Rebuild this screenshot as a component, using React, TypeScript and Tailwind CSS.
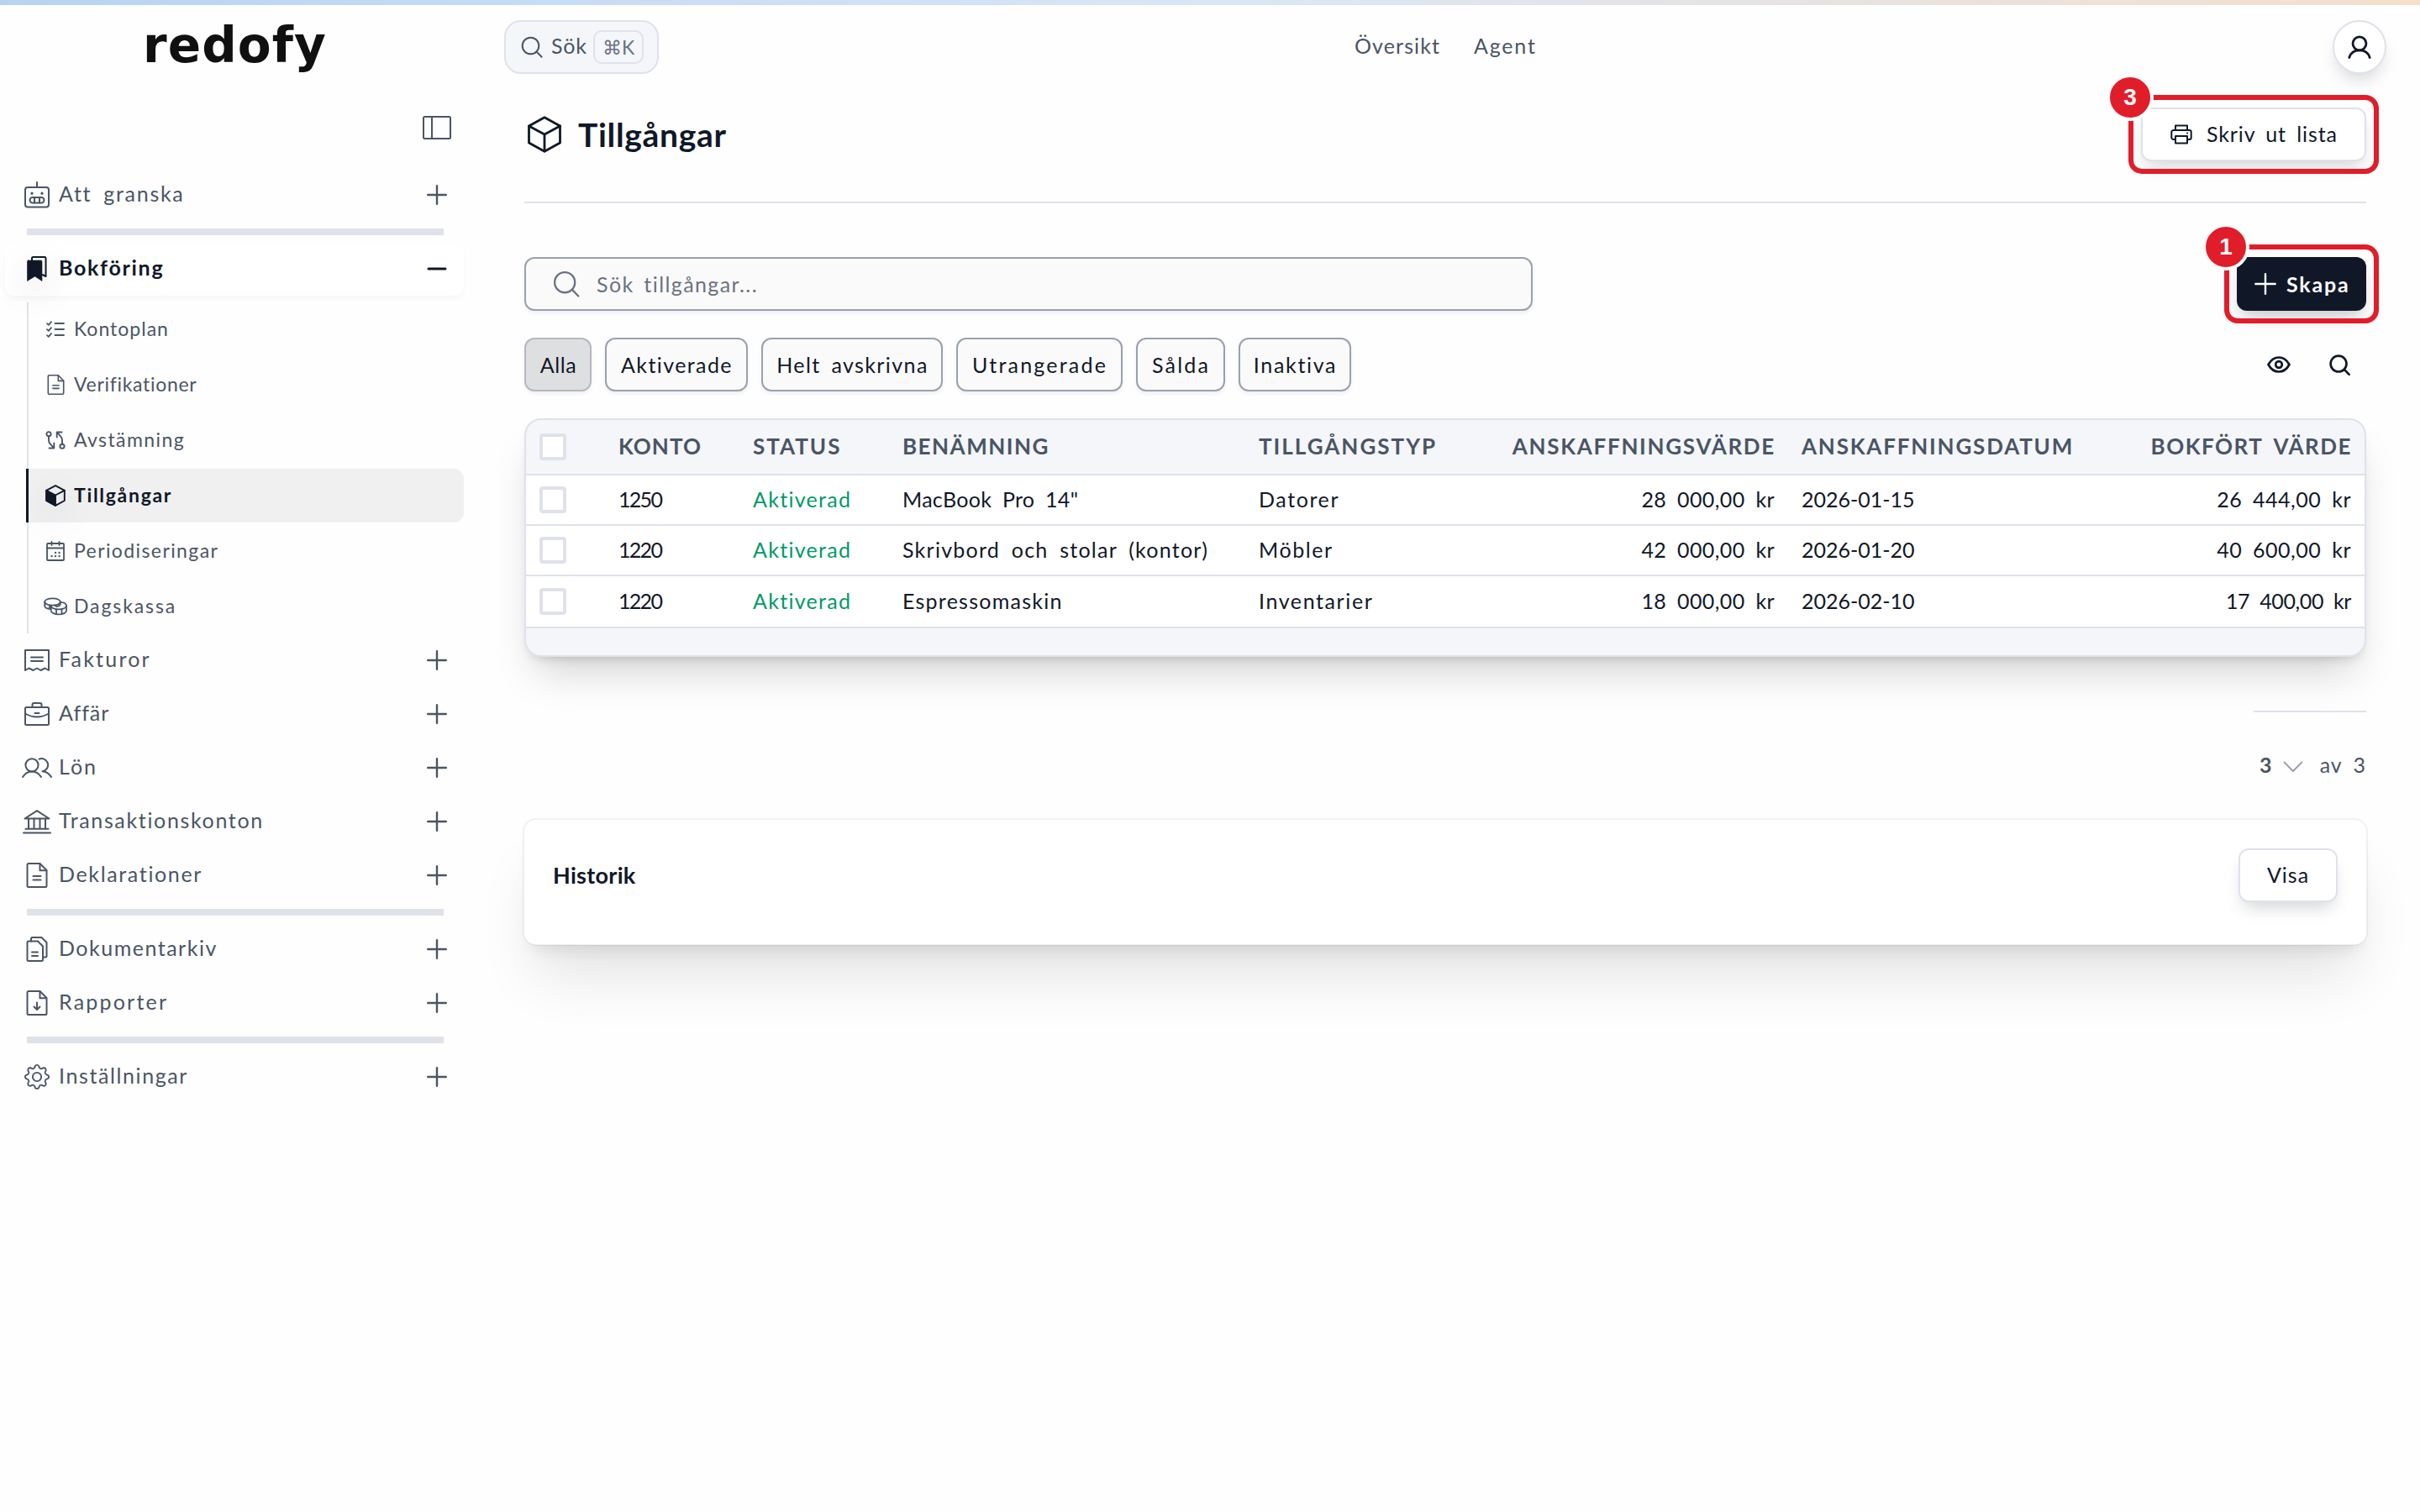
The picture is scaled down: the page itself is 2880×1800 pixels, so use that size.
import { BsGear } from 'react-icons/bs';

const stroke = {
    fill: 'none',
    stroke: 'currentColor',
    strokeWidth: 2,
    strokeLinecap: 'round' as const,
    strokeLinejoin: 'round' as const,
};

const SearchIcon = ({ className, width = 2 }: any) => (
    <svg viewBox="0 0 26 26" className={className} {...stroke} strokeWidth={width}>
        <circle cx="11.5" cy="11.5" r="9.8" />
        <path d="M18.6 18.6 24.6 24.8" />
    </svg>
);

const PlusIcon = ({ className, width = 2.4 }: any) => (
    <svg viewBox="0 0 24 24" className={className} {...stroke} strokeWidth={width}>
        <path d="M12 1.2V22.8M1.2 12H22.8" />
    </svg>
);

const MinusIcon = () => (
    <svg viewBox="0 0 24 24" className="h-6 w-6" {...stroke} strokeWidth={3}>
        <path d="M2 12H22" />
    </svg>
);

const SidebarIcon = () => (
    <svg viewBox="0 0 34 28" className="h-7 w-[34px]" {...stroke}>
        <rect x="1" y="1" width="32" height="26" rx="1.5" />
        <path d="M11 1V27" />
    </svg>
);

const RobotIcon = () => (
    <svg viewBox="0 0 30 32" className="h-8 w-[30px]" {...stroke}>
        <rect x="1" y="7" width="28" height="23.5" rx="3" />
        <path d="M15 1V7" />
        <circle cx="9" cy="14.2" r="1.6" fill="currentColor" stroke="none" />
        <circle cx="21" cy="14.2" r="1.6" fill="currentColor" stroke="none" />
        <rect x="6.5" y="19" width="17" height="6.4" rx="3.2" />
        <path d="M12 19v6.4M18 19v6.4" />
    </svg>
);

const BookmarksIcon = () => (
    <svg viewBox="0 0 24 30" className="h-[30px] w-6 drop-shadow-[0_12px_18px_rgba(17,24,39,0.15)]" {...stroke}>
        <path d="M1.5 5h15a1.5 1.5 0 0 1 1.5 1.5V29.5L9.5 24 .5 29.5V6.5A1.5 1.5 0 0 1 1.5 5Z" fill="currentColor" strokeWidth="0.6" />
        <path d="M6 5V2.5A1.5 1.5 0 0 1 7.5 1H21a1.5 1.5 0 0 1 1.5 1.5V24L18.5 22" />
    </svg>
);

const FileIcon = ({ className }: any) => (
    <svg viewBox="0 0 26 30" className={className} {...stroke}>
        <path d="M3 1H16.5L24.5 9V27.5A1.5 1.5 0 0 1 23 29H3A1.5 1.5 0 0 1 1.5 27.5V2.5A1.5 1.5 0 0 1 3 1Z" />
        <path d="M16.5 1.5V9.2H24" />
        <path d="M8.5 16H17.5M8.5 20.5H17.5" />
    </svg>
);

const ReportIcon = () => (
    <svg viewBox="0 0 26 30" className="h-[30px] w-[26px]" {...stroke}>
        <path d="M3 1H16.5L24.5 9V27.5A1.5 1.5 0 0 1 23 29H3A1.5 1.5 0 0 1 1.5 27.5V2.5A1.5 1.5 0 0 1 3 1Z" />
        <path d="M16.5 1.5V9.2H24" />
        <path d="M13 14.5V22.5M9.5 19.5 13 23 16.5 19.5" />
    </svg>
);

const DocumentsIcon = () => (
    <svg viewBox="0 0 26 30" className="h-[30px] w-[26px]" {...stroke}>
        <path d="M3 5.5H14L20 11.5V27.5A1.5 1.5 0 0 1 18.5 29H3A1.5 1.5 0 0 1 1.5 27.5V7A1.5 1.5 0 0 1 3 5.5Z" />
        <path d="M6 5.5V2.5A1.5 1.5 0 0 1 7.5 1H18.5L24.5 7V23A1.5 1.5 0 0 1 23 24.5H20.5" />
        <path d="M7 18.5H14M7 23H14" />
    </svg>
);

const ChecklistIcon = () => (
    <svg viewBox="0 0 22 20" className="h-5 w-[22px]" {...stroke} strokeWidth={1.8}>
        <path d="M1 3.2 2.8 4.8 6 1.2M1 10.2 2.8 11.8 6 8.2M1 17.2 2.8 18.8 6 15.2" />
        <path d="M10.5 3H21M10.5 10H21M10.5 17H21" />
    </svg>
);

const ReconcileIcon = () => (
    <svg viewBox="0 0 24 22" className="h-[22px] w-6" {...stroke} strokeWidth={1.9}>
        <circle cx="4" cy="3.7" r="2.6" />
        <path d="M4 6.3V11Q4 13.5 5.5 15L10 20.3M10.3 14.5V20.5H4.5" />
        <circle cx="20" cy="18.3" r="2.6" />
        <path d="M20 15.7V11Q20 8.5 18.5 7L14 1.7M13.7 7.5V1.5H19.5" />
    </svg>
);

const CubeFilledIcon = () => (
    <svg viewBox="0 0 24 26" className="h-[26px] w-6 drop-shadow-[0_12px_18px_rgba(17,24,39,0.15)]" {...stroke} strokeWidth={1.9}>
        <path d="M12 1.2 22.8 6.8V19L12 24.8 1.2 19V6.8Z" />
        <path d="M22.8 6.8 12 12.5" />
        <path d="M1.2 6.8 12 12.5V24.8L1.2 19Z" fill="currentColor" />
    </svg>
);

const CubeIcon = () => (
    <svg viewBox="0 0 42 44" className="h-11 w-[42px]" {...stroke} strokeWidth={2.8}>
        <path d="M21 1.8 39.5 12V32L21 42.2 2.5 32V12Z" />
        <path d="M2.5 12 21 22 39.5 12M21 22V42" />
    </svg>
);

const CalendarIcon = () => (
    <svg viewBox="0 0 22 24" className="h-6 w-[22px]" {...stroke} strokeWidth={1.8}>
        <rect x="1" y="3" width="20" height="20" rx="1" />
        <path d="M1 8.5H21M6.5 1V5M15.5 1V5" />
        <path d="M11 14h.1M15.5 14h.1M6.5 18.2h.1M11 18.2h.1M15.5 18.2h.1" strokeWidth={2.3} />
    </svg>
);

const CoinsIcon = () => (
    <svg viewBox="0 0 28 22" className="h-[22px] w-7" {...stroke} strokeWidth={1.8}>
        <ellipse cx="10.5" cy="5.5" rx="9.3" ry="4.2" />
        <path d="M1.2 5.5V10C1.2 12 4 13.8 8.5 14M7 9.5V13.8M13.5 9.5V10" />
        <path d="M19.8 5.8C24 6 27 7.6 27 10.2 27 12.6 23 14.4 18 14.4S8.7 12.6 8.7 10.2" />
        <path d="M8.7 10.2V16C8.7 18.4 13 20.4 18 20.4S27 18.4 27 16V10.2M15 14.3V20M21.5 14.3V20M19.8 5.5V8.5Q19 10.8 15 11" />
    </svg>
);

const ReceiptIcon = () => (
    <svg viewBox="0 0 30 26" className="h-[26px] w-[30px]" {...stroke}>
        <path d="M1 1H29V25L24.5 22.5 19.5 25 15 22.5 10.5 25 5.5 22.5 1 25Z" />
        <path d="M8 9.5H22M8 14H22" />
    </svg>
);

const BriefcaseIcon = () => (
    <svg viewBox="0 0 30 28" className="h-7 w-[30px]" {...stroke}>
        <rect x="1" y="6" width="28" height="21" rx="1.5" />
        <path d="M9.5 6V3A2 2 0 0 1 11.5 1H18.5A2 2 0 0 1 20.5 3V6M1 13.5Q15 21.5 29 13.5M12.5 13H17.5" />
    </svg>
);

const PeopleIcon = () => (
    <svg viewBox="0 0 36 24" className="h-6 w-9" {...stroke}>
        <circle cx="12" cy="8.8" r="7.6" />
        <path d="M1 23Q5 16.4 12 16.4T23 23" />
        <path d="M20.5 1.7A7.6 7.6 0 1 1 24.5 16.2Q31 16.6 35 23" />
    </svg>
);

const BankIcon = () => (
    <svg viewBox="0 0 34 29" className="h-[29px] w-[34px]" {...stroke}>
        <path d="M17 1.2 31.5 10.5H2.5Z" />
        <path d="M7 10.5V22.5M13.5 10.5V22.5M20.5 10.5V22.5M27 10.5V22.5M3.5 22.8H30.5M1 27.5H33" />
    </svg>
);

const UserIcon = () => (
    <svg viewBox="0 0 28 28" className="h-7 w-7" {...stroke} strokeWidth={2.8}>
        <circle cx="14" cy="9.8" r="8" />
        <path d="M1.8 26.5C3.5 20.5 8 17.8 14 17.8S24.5 20.5 26.2 26.5" />
    </svg>
);

const PrinterIcon = () => (
    <svg viewBox="0 0 26 24" className="h-6 w-[26px]" {...stroke}>
        <path d="M6 7V1.5H20V7M6 18H3.5A2.2 2.2 0 0 1 1.3 15.8V9.2A2.2 2.2 0 0 1 3.5 7H22.5A2.2 2.2 0 0 1 24.7 9.2V15.8A2.2 2.2 0 0 1 22.5 18H20" />
        <path d="M6 14H20V22.5H6ZM20 10.6h.1" />
    </svg>
);

const EyeIcon = () => (
    <svg viewBox="0 0 28 20" className="h-5 w-7" {...stroke} strokeWidth={2.7}>
        <path d="M1.5 10C4.5 4.5 9 1.5 14 1.5S23.5 4.5 26.5 10C23.5 15.5 19 18.5 14 18.5S4.5 15.5 1.5 10Z" />
        <circle cx="14" cy="10" r="3.8" />
    </svg>
);

const ChevronIcon = () => (
    <svg viewBox="0 0 24 14" className="mt-1 h-3.5 w-6 text-gray-400" {...stroke}>
        <path d="M1.5 1.5 12 12 22.5 1.5" />
    </svg>
);

const NavItem = ({ icon, label, open, text = 'tracking-[1.5px]' }: any) => (
    <div
        className={
            open
                ? 'mr-2 ml-1.5 flex h-16 items-center rounded-xl bg-white pr-5 pl-3 font-bold text-gray-900 shadow-[0_4px_6px_rgba(0,0,0,0.03)]'
                : 'mr-2 ml-1.5 flex h-16 items-center pr-5 pl-3 text-gray-600'
        }
    >
        <span className="flex w-[52px] justify-center">{icon}</span>
        <span className={`flex-1 pb-0.5 text-[25px] [word-spacing:6px] ${text}`}>{label}</span>
        {open ? <MinusIcon /> : <PlusIcon className="h-6 w-6" />}
    </div>
);

const subItems = [
    { icon: <ChecklistIcon />, label: 'Kontoplan', text: 'tracking-[1px]' },
    { icon: <FileIcon className="h-6 w-[21px]" />, label: 'Verifikationer', text: 'tracking-[0.7px]' },
    { icon: <ReconcileIcon />, label: 'Avstämning', text: 'tracking-[1.4px]' },
    { icon: <CubeFilledIcon />, label: 'Tillgångar', text: 'tracking-[1.7px]', active: true },
    { icon: <CalendarIcon />, label: 'Periodiseringar', text: 'tracking-[1.4px]' },
    { icon: <CoinsIcon />, label: 'Dagskassa', text: 'tracking-[1.9px]' },
];

const Divider = () => <div className="my-2 ml-8 h-2 w-[496px] bg-[#dfe2ea]" />;

const Sidebar = () => (
    <aside className="w-[560px] shrink-0">
        <div className="flex h-[104px] items-center justify-end pt-2 pr-[23px]">
            <span className="text-gray-600">
                <SidebarIcon />
            </span>
        </div>
        <NavItem icon={<RobotIcon />} label="Att granska" text="tracking-[1.7px]" />
        <Divider />
        <NavItem icon={<BookmarksIcon />} label="Bokföring" text="tracking-[1.7px]" open />
        <div className="mt-2 ml-8 flex flex-col gap-0.5 border-l-2 border-[#dfe2ea]">
            {subItems.map((s) => (
                <div
                    key={s.label}
                    className={
                        s.active
                            ? 'mr-2 -ml-[3px] flex h-16 items-center rounded-r-xl border-l-[3px] border-gray-900 bg-[#f0f0f1] font-bold text-gray-900'
                            : 'flex h-16 items-center text-gray-600'
                    }
                >
                    <span className="ml-4 flex w-8 justify-center">{s.icon}</span>
                    <span className={`ml-1.5 pb-0.5 text-[23px] ${s.text}`}>{s.label}</span>
                </div>
            ))}
        </div>
        <NavItem icon={<ReceiptIcon />} label="Fakturor" text="tracking-[2.2px]" />
        <NavItem icon={<BriefcaseIcon />} label="Affär" text="tracking-[1px]" />
        <NavItem icon={<PeopleIcon />} label="Lön" text="tracking-[2px]" />
        <NavItem icon={<BankIcon />} label="Transaktionskonton" text="tracking-[1.65px]" />
        <NavItem icon={<FileIcon className="h-[30px] w-[26px]" />} label="Deklarationer" text="tracking-[1.65px]" />
        <Divider />
        <NavItem icon={<DocumentsIcon />} label="Dokumentarkiv" />
        <NavItem icon={<ReportIcon />} label="Rapporter" text="tracking-[2.2px]" />
        <Divider />
        <NavItem icon={<BsGear className="h-[30px] w-[30px]" />} label="Inställningar" text="tracking-[1.6px]" />
    </aside>
);

const Header = () => (
    <header className="flex h-[90px] items-center pt-2.5 text-gray-600">
        <div className="w-[600px] pb-1 pl-[170px] font-['DejaVu_Sans'] text-[58px] leading-none font-bold tracking-[1.1px] text-[#101010]">
            redofy
        </div>
        <div className="flex h-16 w-[184px] items-center rounded-[20px] border-2 border-[#dfe2ea] bg-[#f4f6fa] pl-[18px]">
            <SearchIcon className="h-[26px] w-[26px]" />
            <span className="ml-2.5 w-[50px] pb-0.5 text-[25px] tracking-[0.8px]">Sök</span>
            <span className="flex h-10 w-[60px] items-center justify-center rounded-[10px] border-2 border-[#dfe2ea] text-[23px] text-gray-500">
                ⌘K
            </span>
        </div>
        <nav className="ml-[828px] flex flex-1 pb-0.5 text-[25px] tracking-[1.1px]">
            <a className="w-[142px]">Översikt</a>
            <a className="tracking-[1.8px]">Agent</a>
        </nav>
        <div className="mr-10 flex h-16 w-16 items-center justify-center rounded-full border-2 border-[#dfe2ea] bg-white text-gray-900 shadow-[0_12px_20px_-6px_rgba(17,24,39,0.18)]">
            <UserIcon />
        </div>
    </header>
);

// Red frame with a numbered badge, laid over the control it points at
const Callout = ({ n, children }: any) => (
    <div className="relative">
        {children}
        <div className="pointer-events-none absolute -inset-[15px] rounded-2xl border-[6px] border-[#e11d2a]">
            <div className="absolute -top-[31px] -left-[32px] flex h-14 w-14 items-center justify-center rounded-full border-4 border-white bg-[#e11d2a] font-['Liberation_Sans'] text-[28px] leading-none font-bold text-white">
                {n}
            </div>
        </div>
    </div>
);

const filters = [
    { label: 'Alla', box: 'w-20 border-[#b5b9c1] bg-[#dedfe1] tracking-[0.6px]' },
    { label: 'Aktiverade', box: 'w-[170px] border-gray-400 bg-[#fafafa] tracking-[1.4px]' },
    { label: 'Helt avskrivna', box: 'w-[216px] border-gray-400 bg-[#fafafa] tracking-[1.4px]' },
    { label: 'Utrangerade', box: 'w-[198px] border-gray-400 bg-[#fafafa] tracking-[2.2px]' },
    { label: 'Sålda', box: 'w-[106px] border-gray-400 bg-[#fafafa] tracking-[2.2px]' },
    { label: 'Inaktiva', box: 'w-[134px] border-gray-400 bg-[#fafafa] tracking-[1.7px]' },
];

const assets = [
    { account: '1250', name: 'MacBook Pro 14"', type: 'Datorer', cost: '28 000,00 kr', date: '2026-01-15', value: '26 444,00 kr' },
    { account: '1220', name: 'Skrivbord och stolar (kontor)', type: 'Möbler', cost: '42 000,00 kr', date: '2026-01-20', value: '40 600,00 kr' },
    { account: '1220', name: 'Espressomaskin', type: 'Inventarier', cost: '18 000,00 kr', date: '2026-02-10', value: '17 400,00 kr' },
];

const cols = 'grid grid-cols-[94px_160px_178px_424px_300px_346px_400px_286px] items-center';

const Checkbox = () => <span className="ml-4 block h-8 w-8 rounded-sm border-4 border-[#dfe2ea] bg-white" />;

const AssetTable = () => (
    <div className="mt-8 overflow-hidden rounded-[20px] border-2 border-[#dfe2ea] bg-[#f4f6fa] shadow-[0_30px_50px_-14px_rgba(0,0,0,0.18),0_8px_14px_-8px_rgba(0,0,0,0.2)]">
        <div className={`${cols} h-[66px] border-b-2 border-[#dfe2ea] text-[26px] font-bold tracking-[1.7px] text-gray-600`}>
            <Checkbox />
            <span className="px-4 pb-0.5 tracking-[1px]">KONTO</span>
            <span className="px-4 pb-0.5 tracking-[2px]">STATUS</span>
            <span className="px-4 pb-0.5 tracking-[1.5px]">BENÄMNING</span>
            <span className="px-4 pb-0.5 tracking-[2px]">TILLGÅNGSTYP</span>
            <span className="pr-[15px] pb-0.5 text-right whitespace-nowrap">ANSKAFFNINGSVÄRDE</span>
            <span className="px-4 pb-0.5 tracking-[1.8px]">ANSKAFFNINGSDATUM</span>
            <span className="pr-[15px] pb-0.5 text-right tracking-[1.5px] [word-spacing:6px]">BOKFÖRT VÄRDE</span>
        </div>
        {assets.map((a, i) => (
            <div
                key={a.name}
                className={`${cols} ${i === assets.length - 1 ? 'h-[62px]' : 'h-[60px]'} border-b-2 border-[#dfe2ea] bg-white text-[25px] text-gray-900 [&>span]:whitespace-nowrap`}
            >
                <Checkbox />
                <span className="px-4 tracking-[-1.7px]">{a.account}</span>
                <span className="px-4 tracking-[1.3px] text-emerald-600">Aktiverad</span>
                <span className={`px-4 [word-spacing:6px] ${i === 0 ? 'tracking-[0.3px]' : 'tracking-[1.25px]'}`}>{a.name}</span>
                <span className="px-4 tracking-[1.6px]">{a.type}</span>
                <span className="pr-4 text-right tracking-[0.4px] [word-spacing:6px]">{a.cost}</span>
                <span className="px-4">{a.date}</span>
                <span className={`pr-4 text-right [word-spacing:6px] ${i === 2 ? 'tracking-[-0.4px]' : 'tracking-[0.5px]'}`}>{a.value}</span>
            </div>
        ))}
        <div className="h-8" />
    </div>
);

export default function App() {
    return (
        <div className="min-h-[1800px] w-[2880px] bg-[#fefefe] font-['Lato',sans-serif]">
            <div className="h-1.5 bg-linear-to-r from-[#b7d3f2] via-[#d9e6f7] via-50% to-[#f5dfcb]" />
            <div className="flex flex-col">
                <Header />
                <div className="flex">
                    <Sidebar />
                    <main className="ml-16 w-[2192px]">
                        <div className="flex h-[146px] items-center justify-between border-b-2 border-[#dfe2ea] pb-4">
                            <h1 className="flex items-center text-[39px] font-bold tracking-[0.7px] text-gray-900">
                                <span className="mr-[19px] ml-[3px]">
                                    <CubeIcon />
                                </span>
                                Tillgångar
                            </h1>
                            <Callout n={3}>
                                <button className="flex h-16 w-[268px] items-center rounded-xl border-2 border-[#dfe2ea] bg-white pl-[33px] text-[25px] tracking-[0.9px] text-gray-900 [word-spacing:5px] shadow-[0_12px_20px_-6px_rgba(17,24,39,0.18)]">
                                    <PrinterIcon />
                                    <span className="ml-[17px]">Skriv ut lista</span>
                                </button>
                            </Callout>
                        </div>

                        <div className="mt-16 flex items-center justify-between">
                            <div className="flex h-16 w-[1200px] items-center rounded-xl border-2 border-gray-400 bg-[#fafafa] pl-8 text-gray-500 shadow-[0_3px_5px_rgba(0,0,0,0.06)]">
                                <SearchIcon className="h-8 w-8" width={1.9} />
                                <span className="ml-5 pt-0.5 text-[25px] tracking-[1.4px] [word-spacing:4px]">Sök tillgångar...</span>
                            </div>
                            <Callout n={1}>
                                <button className="flex h-16 w-[154px] items-center rounded-xl bg-gray-900 pl-[21px] text-[25px] font-bold tracking-[1.8px] text-white shadow-[0_12px_20px_-6px_rgba(17,24,39,0.25)]">
                                    <PlusIcon className="h-[26px] w-[26px]" width={2.2} />
                                    <span className="ml-3 pt-0.5">Skapa</span>
                                </button>
                            </Callout>
                        </div>

                        <div className="mt-8 flex items-center gap-4">
                            {filters.map((f) => (
                                <button
                                    key={f.label}
                                    className={`flex h-16 items-center justify-center rounded-xl border-2 pt-0.5 pl-px text-[25px] whitespace-nowrap text-gray-900 [word-spacing:5px] shadow-[0_3px_5px_rgba(0,0,0,0.06)] ${f.box}`}
                                >
                                    {f.label}
                                </button>
                            ))}
                            <div className="mr-[19px] ml-auto flex items-center gap-[46px] text-gray-900">
                                <EyeIcon />
                                <SearchIcon className="h-[25px] w-[25px]" width={2.8} />
                            </div>
                        </div>

                        <AssetTable />

                        <div className="mt-16 ml-auto w-[134px] border-t-2 border-[#dfe2ea]">
                            <div className="flex h-[126px] items-center text-[25px] text-gray-600">
                                <span className="ml-[7px] w-7 font-bold">3</span>
                                <ChevronIcon />
                                <span className="ml-5 tracking-[1px] whitespace-nowrap [word-spacing:6px]">av 3</span>
                            </div>
                        </div>

                        <section className="-mx-0.5 flex h-[152px] items-center justify-between rounded-2xl border-2 border-black/5 bg-white bg-clip-padding px-[34px] pb-4 shadow-[0_50px_70px_-16px_rgba(0,0,0,0.11),0_16px_20px_-12px_rgba(0,0,0,0.1)]">
                            <h2 className="text-[27px] font-bold tracking-[0.3px] text-gray-900">Historik</h2>
                            <button className="h-16 w-[118px] rounded-xl border-2 border-[#dfe2ea] bg-white text-[25px] tracking-[1px] text-gray-900 shadow-[0_12px_20px_-6px_rgba(17,24,39,0.18)]">
                                Visa
                            </button>
                        </section>
                    </main>
                </div>
            </div>
        </div>
    );
}
